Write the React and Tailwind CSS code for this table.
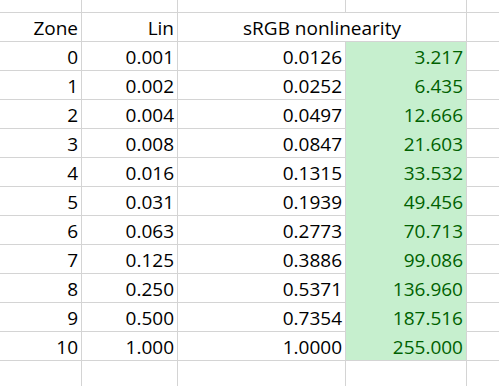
import React from "react";

const rows = [
  ["0", "0.001", "0.0126", "3.217"],
  ["1", "0.002", "0.0252", "6.435"],
  ["2", "0.004", "0.0497", "12.666"],
  ["3", "0.008", "0.0847", "21.603"],
  ["4", "0.016", "0.1315", "33.532"],
  ["5", "0.031", "0.1939", "49.456"],
  ["6", "0.063", "0.2773", "70.713"],
  ["7", "0.125", "0.3886", "99.086"],
  ["8", "0.250", "0.5371", "136.960"],
  ["9", "0.500", "0.7354", "187.516"],
  ["10", "1.000", "1.0000", "255.000"],
];

const cell = "border-r border-b border-[#d4d4d4] flex items-end justify-end pr-[3px] pb-[3px] leading-none";

export default function App() {
  return (
    <div
      className="w-[499px] h-[386px] overflow-hidden bg-white text-[19px] text-black"
      style={{ fontFamily: '"Open Sans", sans-serif' }}
    >
      <div className="grid grid-cols-[82px_96px_168px_121px_32px] grid-rows-[13px_repeat(12,29px)_25px]">
        {/* top partial row */}
        <div className="border-r border-b border-[#d4d4d4]" />
        <div className="border-r border-b border-[#d4d4d4]" />
        <div className="border-r border-b border-[#d4d4d4]" />
        <div className="border-r border-b border-[#d4d4d4]" />
        <div className="border-b border-[#d4d4d4]" />
        {/* header */}
        <div className={cell}>Zone</div>
        <div className={cell}>Lin</div>
        <div className="col-span-2 border-r border-b border-[#d4d4d4] flex items-end justify-center pb-[3px] leading-none">
          sRGB nonlinearity
        </div>
        <div className="border-b border-[#d4d4d4]" />
        {rows.map((r, i) => (
          <React.Fragment key={i}>
            <div className={cell}>{r[0]}</div>
            <div className={cell}>{r[1]}</div>
            <div className={cell}>{r[2]}</div>
            <div
              className={
                "border-r border-b border-r-[#d4d4d4] bg-[#c6efce] text-[#006100] flex items-end justify-end pr-[3px] pb-[3px] leading-none " +
                (i === rows.length - 1 ? "border-b-[#d4d4d4]" : "border-b-[#c6efce]")
              }
            >
              {r[3]}
            </div>
            <div className="border-b border-[#d4d4d4]" />
          </React.Fragment>
        ))}
        {/* bottom partial row */}
        <div className="border-r border-[#d4d4d4]" />
        <div className="border-r border-[#d4d4d4]" />
        <div className="border-r border-[#d4d4d4]" />
        <div className="border-r border-[#d4d4d4]" />
        <div />
      </div>
    </div>
  );
}
